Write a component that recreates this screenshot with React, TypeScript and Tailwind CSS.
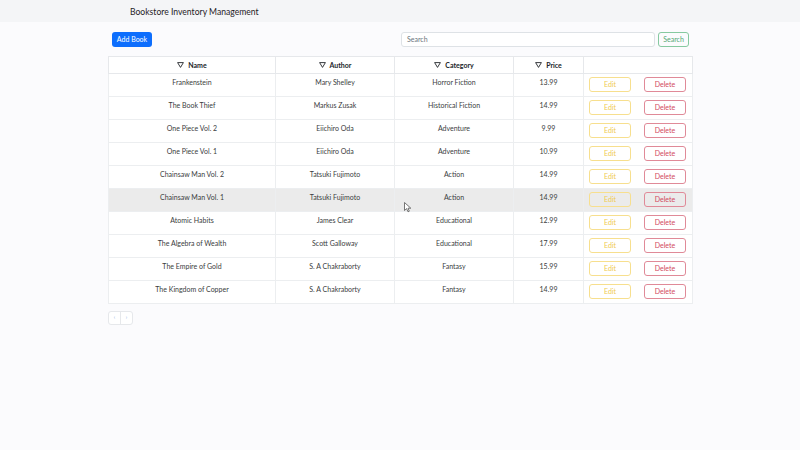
import React from "react";

const books = [
  ["Frankenstein", "Mary Shelley", "Horror Fiction", "13.99"],
  ["The Book Thief", "Markus Zusak", "Historical Fiction", "14.99"],
  ["One Piece Vol. 2", "Eiichiro Oda", "Adventure", "9.99"],
  ["One Piece Vol. 1", "Eiichiro Oda", "Adventure", "10.99"],
  ["Chainsaw Man Vol. 2", "Tatsuki Fujimoto", "Action", "14.99"],
  ["Chainsaw Man Vol. 1", "Tatsuki Fujimoto", "Action", "14.99"],
  ["Atomic Habits", "James Clear", "Educational", "12.99"],
  ["The Algebra of Wealth", "Scott Galloway", "Educational", "17.99"],
  ["The Empire of Gold", "S. A Chakraborty", "Fantasy", "15.99"],
  ["The Kingdom of Copper", "S. A Chakraborty", "Fantasy", "14.99"],
];

function Tri() {
  return (
    <svg width="7" height="6" viewBox="0 0 7 6" className="inline-block mr-[4px] -mt-[2px]">
      <path d="M0.6 0.6 H6.4 L3.5 5.4 Z" fill="none" stroke="#212529" strokeWidth="0.9" strokeLinejoin="round" />
    </svg>
  );
}

export default function App() {
  return (
    <div className="relative w-[800px] h-[450px] bg-[#fbfbfd] text-[#212529] overflow-hidden" style={{ fontFamily: "Lato, 'Noto Sans', sans-serif" }}>
      <div className="h-[22px] bg-[#f4f5f7] flex items-center pl-[130px] pt-[2px]">
        <span className="text-[8.6px] leading-none text-[#1f2226]">Bookstore Inventory Management</span>
      </div>
      <div className="w-[584px] mx-auto pt-[10px]">
        <div className="flex items-center h-[15px]">
          <button className="ml-[4px] h-[15px] w-[40px] rounded-[3px] bg-[#0d6efd] text-white text-[7px] leading-none">Add Book</button>
          <div className="flex-1" />
          <div className="h-[15px] w-[254px] rounded-[3px] border border-[#dee2e6] bg-white flex items-center pl-[5px] text-[7px] text-[#6c757d]">Search</div>
          <button className="ml-[3px] mr-[3px] h-[15px] w-[31px] rounded-[3px] border border-[#86c9a0] text-[#53a874] text-[7px] leading-none">Search</button>
        </div>
        <table className="mt-[9px] w-[584px] table-fixed border-collapse bg-white text-[7px]">
          <colgroup>
            <col className="w-[167px]" />
            <col className="w-[119px]" />
            <col className="w-[119px]" />
            <col className="w-[70px]" />
            <col className="w-[109px]" />
          </colgroup>
          <thead>
            <tr className="h-[17px]">
              {["Name", "Author", "Category", "Price"].map((h) => (
                <th key={h} className="border border-[#e6e8eb] font-bold text-center align-middle leading-[10px]">
                  <Tri />
                  {h}
                </th>
              ))}
              <th className="border border-[#e6e8eb]" />
            </tr>
          </thead>
          <tbody>
            {books.map((b, i) => {
              const hover = i === 5;
              return (
                <tr key={i} className={`h-[23px] ${hover ? "bg-[#ebebeb]" : ""}`}>
                  {b.map((c, j) => (
                    <td key={j} className={`border-t border-b border-[#eceef0] ${j < 4 ? "border-r" : ""} ${j === 0 ? "border-l" : ""} text-center align-top pt-[3px] leading-[10px] text-[#3a3d40]`}>
                      {c}
                    </td>
                  ))}
                  <td className="border border-[#eceef0] align-top pt-[3px]">
                    <div className="flex items-center justify-between pl-[5px] pr-[6px]">
                      <button className="h-[15px] w-[42px] rounded-[3px] border border-[#f7df8e] text-[#f0cb50] text-[7px] leading-none">Edit</button>
                      <button className="h-[15px] w-[42px] rounded-[3px] border border-[#e08a98] text-[#d2495e] text-[7px] leading-none">Delete</button>
                    </div>
                  </td>
                </tr>
              );
            })}
          </tbody>
        </table>
        <div className="mt-[7px] flex h-[14px] w-[25px] rounded-[3px] border border-[#e6e8eb] bg-white text-[5px] text-[#86a8e0]">
          <div className="flex-1 flex items-center justify-center border-r border-[#e6e8eb]">‹</div>
          <div className="flex-1 flex items-center justify-center">›</div>
        </div>
      </div>
      <svg className="absolute left-[404px] top-[202px]" width="8" height="11" viewBox="0 0 8 11">
        <path d="M0.5 0.5 V8.5 L2.6 6.6 L4 9.8 L5.3 9.2 L4 6.2 H6.8 Z" fill="#fff" stroke="#555" strokeWidth="0.8" strokeLinejoin="round" />
      </svg>
    </div>
  );
}
